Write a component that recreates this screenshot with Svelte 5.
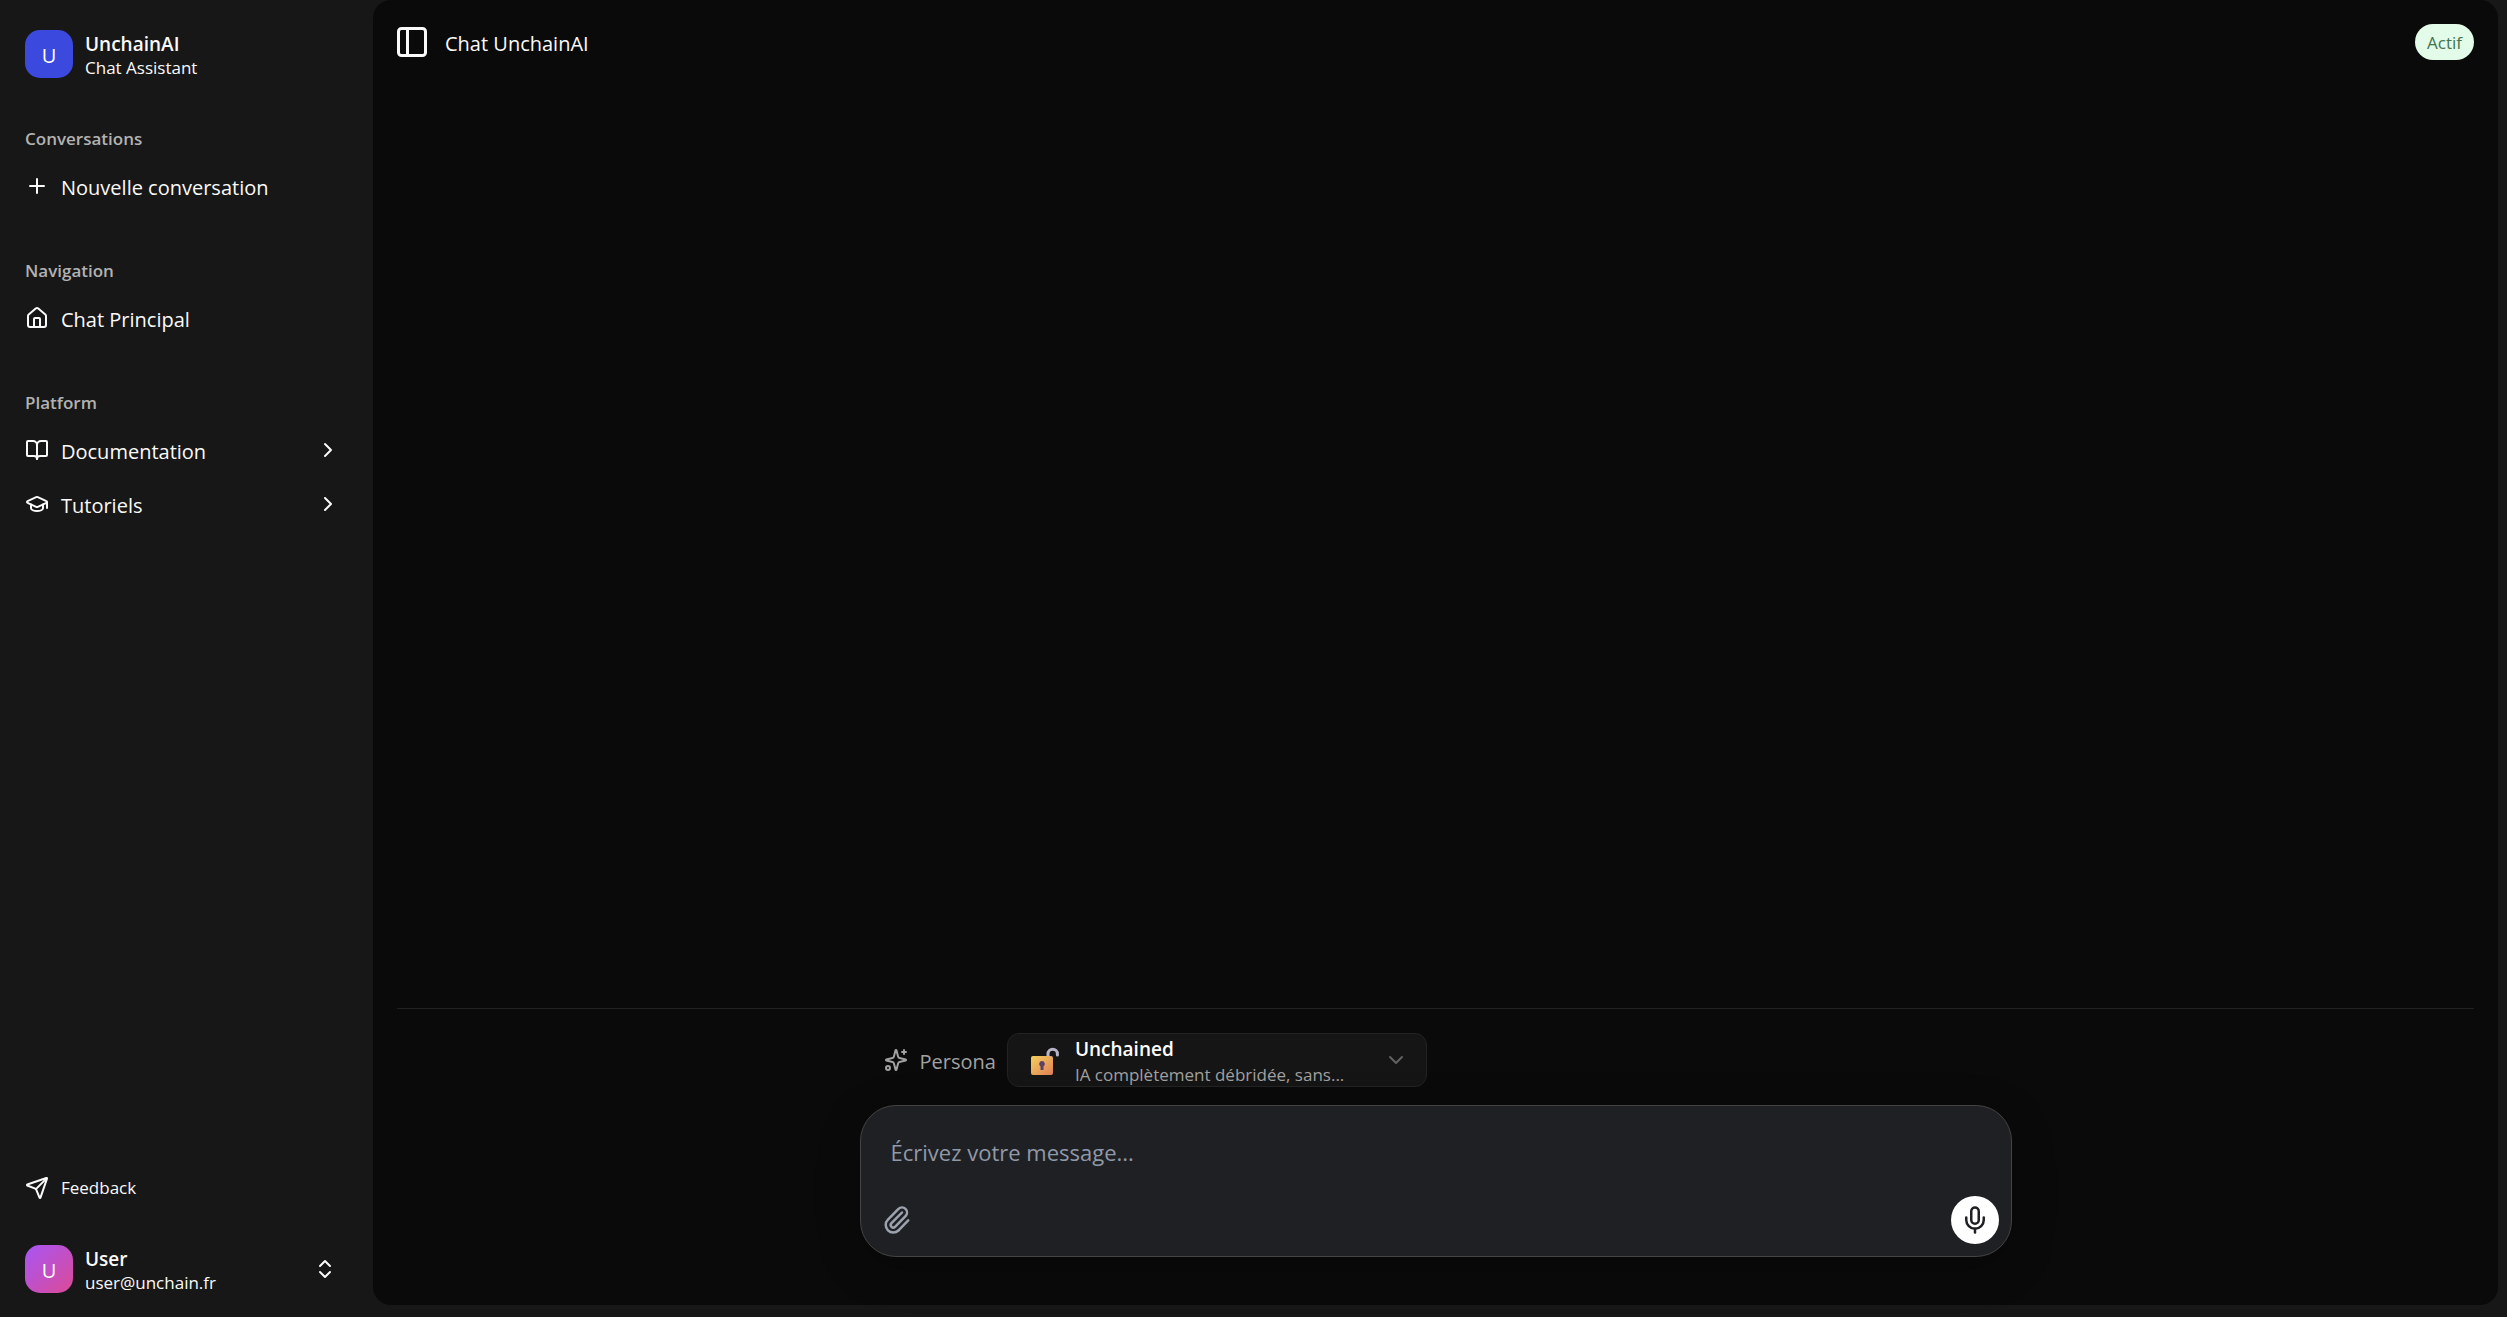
<script>
  const sections = [
    { title: 'Conversations', items: [{ label: 'Nouvelle conversation', icon: 'plus' }] },
    { title: 'Navigation', items: [{ label: 'Chat Principal', icon: 'home' }] },
    {
      title: 'Platform',
      items: [
        { label: 'Documentation', icon: 'book', more: true },
        { label: 'Tutoriels', icon: 'cap', more: true },
      ],
    },
  ];
  const icons = {
    plus: ['M5 12h14', 'M12 5v14'],
    home: [
      'M15 21v-8a1 1 0 0 0-1-1h-4a1 1 0 0 0-1 1v8',
      'M3 10a2 2 0 0 1 .709-1.528l7-5.999a2 2 0 0 1 2.582 0l7 5.999A2 2 0 0 1 21 10v9a2 2 0 0 1-2 2H5a2 2 0 0 1-2-2z',
    ],
    book: [
      'M12 7v14',
      'M3 18a1 1 0 0 1-1-1V4a1 1 0 0 1 1-1h5a4 4 0 0 1 4 4 4 4 0 0 1 4-4h5a1 1 0 0 1 1 1v13a1 1 0 0 1-1 1h-6a3 3 0 0 0-3 3 3 3 0 0 0-3-3z',
    ],
    cap: [
      'M21.42 10.922a1 1 0 0 0-.019-1.838L12.83 5.18a2 2 0 0 0-1.66 0L2.6 9.08a1 1 0 0 0 0 1.832l8.57 3.908a2 2 0 0 0 1.66 0z',
      'M22 10v6',
      'M6 12.5V16a6 3 0 0 0 12 0v-3.5',
    ],
    right: ['m9 18 6-6-6-6'],
    down: ['m6 9 6 6 6-6'],
    updown: ['m7 15 5 5 5-5', 'm7 9 5-5 5 5'],
    send: [
      'M14.536 21.686a.5.5 0 0 0 .937-.024l6.5-19a.496.496 0 0 0-.635-.635l-19 6.5a.5.5 0 0 0-.024.937l7.93 3.18a2 2 0 0 1 1.112 1.11z',
      'm21.854 2.147-10.94 10.939',
    ],
    panel: ['M5 3h14a2 2 0 0 1 2 2v14a2 2 0 0 1-2 2H5a2 2 0 0 1-2-2V5a2 2 0 0 1 2-2z', 'M9 3v18'],
    sparkles: [
      'M9.937 15.5A2 2 0 0 0 8.5 14.063l-6.135-1.582a.5.5 0 0 1 0-.962L8.5 9.936A2 2 0 0 0 9.937 8.5l1.582-6.135a.5.5 0 0 1 .963 0L14.063 8.5A2 2 0 0 0 15.5 9.937l6.135 1.581a.5.5 0 0 1 0 .964L15.5 14.063a2 2 0 0 0-1.437 1.437l-1.582 6.135a.5.5 0 0 1-.963 0z',
      'M20 2v4',
      'M22 4h-4',
      'M6 20a2 2 0 1 1-4 0 2 2 0 0 1 4 0z',
    ],
    clip: [
      'M13.234 20.252 21 12.3',
      'm16 6-8.414 8.586a2 2 0 0 0 0 2.828 2 2 0 0 0 2.828 0l8.414-8.586a4 4 0 0 0 0-5.656 4 4 0 0 0-5.656 0l-8.415 8.585a6 6 0 1 0 8.486 8.486',
    ],
    mic: ['M12 2a3 3 0 0 0-3 3v7a3 3 0 0 0 6 0V5a3 3 0 0 0-3-3z', 'M19 10v2a7 7 0 0 1-14 0v-2', 'M12 19v3'],
  };
  let message = $state('');
</script>

{#snippet icon(name, size = 24)}
  <svg class="icon" width={size} height={size} viewBox="0 0 24 24" aria-hidden="true">
    {#each icons[name] as d}<path {d} />{/each}
  </svg>
{/snippet}

<div class="app">
  <aside>
    <a class="brand" href="#home">
      <span class="avatar logo">U</span>
      <span class="who"><strong>UnchainAI</strong><small>Chat Assistant</small></span>
    </a>
    <nav>
      {#each sections as section}
        <section>
          <h2>{section.title}</h2>
          <ul>
            {#each section.items as item}
              <li>
                <button class="item">
                  {@render icon(item.icon)}
                  <span class="label">{item.label}</span>
                  {#if item.more}{@render icon('right')}{/if}
                </button>
              </li>
            {/each}
          </ul>
        </section>
      {/each}
    </nav>
    <button class="item feedback">{@render icon('send')}<span>Feedback</span></button>
    <button class="brand user">
      <span class="avatar person">U</span>
      <span class="who"><strong>User</strong><small>user@unchain.fr</small></span>
      {@render icon('updown')}
    </button>
  </aside>

  <main>
    <header>
      <button class="toggle" aria-label="Toggle sidebar">{@render icon('panel', 36)}</button>
      <h1>Chat UnchainAI</h1>
      <span class="badge">Actif</span>
    </header>
    <div class="messages"></div>
    <footer>
      <div class="column">
        <div class="persona">
          <span class="persona-label" id="persona-label">{@render icon('sparkles')}<span class="label">Persona</span></span>
          <button class="picker" aria-labelledby="persona-label persona-name" aria-haspopup="listbox">
            <svg class="lock" width="28" height="32" viewBox="0 0 28 32" aria-hidden="true">
              <defs>
                <linearGradient id="brass" x1="0" y1="0" x2="1" y2="1">
                  <stop offset="0" stop-color="#f5cf5c" />
                  <stop offset="1" stop-color="#e07f58" />
                </linearGradient>
              </defs>
              <path d="M17 14V10a4.700 4.700 0 0 1 9.400 0v1" fill="none" stroke="#b9b3c6" stroke-width="3" stroke-linecap="round" />
              <rect x="0" y="12" width="22" height="19" rx="2" fill="url(#brass)" />
              <path d="M11 17a3 3 0 0 0-1.500 5.500V26h3v-3.500A3 3 0 0 0 11 17z" fill="#5b4368" />
            </svg>
            <span class="choice"><strong id="persona-name">Unchained</strong><small>IA complètement débridée, sans...</small></span>
            {@render icon('down')}
          </button>
        </div>
        <form class="composer">
          <textarea rows="1" placeholder="Écrivez votre message..." aria-label="Message" bind:value={message}></textarea>
          <div class="actions">
            <button type="button" class="attach" aria-label="Joindre un fichier">{@render icon('clip', 30)}</button>
            <button type="button" class="mic" aria-label="Dicter">{@render icon('mic', 30)}</button>
          </div>
        </form>
      </div>
    </footer>
  </main>
</div>

<style>
  :global(body) {
    margin: 0;
    background: #171717;
  }
  .app {
    display: flex;
    min-height: 100vh;
    box-sizing: border-box;
    padding-right: 9px;
    color: #fafafa;
    font: 20px/24px 'Open Sans', 'Noto Sans', sans-serif;
    background: #171717;
  }
  button {
    font: inherit;
    color: inherit;
    background: none;
    border: 0;
    padding: 0;
    text-align: left;
    cursor: pointer;
  }
  .icon {
    flex: none;
    fill: none;
    stroke: currentColor;
    stroke-width: 2;
    stroke-linecap: round;
    stroke-linejoin: round;
  }
  aside {
    width: 373px;
    flex: none;
    box-sizing: border-box;
    padding: 30px 33px 24px 25px;
    display: flex;
    flex-direction: column;
  }
  .brand {
    display: flex;
    align-items: center;
    gap: 12px;
    color: inherit;
    text-decoration: none;
  }
  .user {
    padding-right: 3px;
  }
  .avatar {
    width: 48px;
    height: 48px;
    flex: none;
    border-radius: 15px;
    display: grid;
    place-items: center;
    color: #fff;
    padding-top: 3px;
    box-sizing: border-box;
  }
  .logo {
    background: #3b49df;
  }
  .person {
    background: linear-gradient(135deg, #a855f7, #db4a94);
  }
  .who,
  .choice {
    flex: 1;
    display: flex;
    flex-direction: column;
  }
  .who {
    height: 48px;
    padding-top: 2px;
    box-sizing: border-box;
  }
  strong {
    font-weight: 600;
    font-size: 19px;
  }
  small {
    font-size: 17px;
  }
  nav {
    flex: 1;
    padding-top: 36px;
  }
  section {
    padding-bottom: 36px;
  }
  h2 {
    margin: 0;
    height: 48px;
    padding-top: 2px;
    box-sizing: border-box;
    display: flex;
    align-items: center;
    font-size: 17px;
    font-weight: 600;
    color: #b2b2b2;
  }
  ul {
    list-style: none;
    margin: 0;
    padding: 0;
    display: grid;
    gap: 6px;
  }
  .item {
    width: 100%;
    height: 48px;
    display: flex;
    align-items: center;
    gap: 12px;
  }
  .label {
    flex: 1;
    padding-top: 3px;
  }
  .feedback {
    font-size: 17px;
    margin-bottom: 33px;
  }
  main {
    flex: 1;
    min-width: 0;
    display: flex;
    flex-direction: column;
    margin-bottom: 12px;
    padding: 0 24px;
    background: #0a0a0a;
    border-radius: 18px;
  }
  header {
    height: 84px;
    display: flex;
    align-items: center;
    gap: 15px;
  }
  .toggle {
    display: flex;
    margin-left: -3px;
  }
  h1 {
    flex: 1;
    margin: 0;
    padding-top: 3px;
    font-size: 20px;
    font-weight: 400;
  }
  .badge {
    padding: 7px 12px 5px;
    border-radius: 18px;
    font-size: 17px;
    color: #3f7550;
    background: #e3fbe9;
  }
  .messages {
    flex: 1;
  }
  footer {
    border-top: 1px solid #212121;
    padding: 24px 0 48px;
  }
  .column {
    max-width: 1152px;
    margin: 0 auto;
    display: grid;
    gap: 18px;
  }
  .persona {
    display: flex;
    align-items: center;
    gap: 11px;
    padding: 0 24px;
  }
  .persona-label {
    display: flex;
    align-items: center;
    gap: 12px;
    color: #a1a1a1;
  }
  .picker {
    width: 420px;
    height: 54px;
    box-sizing: border-box;
    display: flex;
    align-items: center;
    gap: 16px;
    padding: 0 18px 0 23px;
    border: 1px solid #232323;
    border-radius: 12px;
    background: #151515;
    color: #fff;
  }
  .choice {
    gap: 2px;
    padding-top: 4px;
  }
  .choice small {
    color: #a1a1a1;
  }
  .picker > :global(.icon) {
    color: #616161;
  }
  .composer {
    display: flex;
    flex-direction: column;
    height: 152px;
    box-sizing: border-box;
    padding: 28px 12px 12px;
    border: 1px solid #444;
    border-radius: 36px;
    background: #1f2023;
    box-shadow: 0 12px 45px rgb(0 0 0 / 24%);
  }
  textarea {
    flex: 1;
    margin: 0;
    padding: 0 18px;
    border: 0;
    outline: 0;
    resize: none;
    background: none;
    color: #fff;
    font: 22px/36px 'Open Sans', 'Noto Sans', sans-serif;
  }
  textarea::placeholder {
    color: #9099a8;
    opacity: 1;
  }
  .actions {
    display: flex;
    justify-content: space-between;
    align-items: center;
  }
  .attach {
    display: flex;
    padding: 9px;
    color: #9ca3af;
  }
  .mic {
    width: 48px;
    height: 48px;
    display: grid;
    place-items: center;
    border-radius: 50%;
    background: #fff;
    color: #1f2023;
  }
</style>
